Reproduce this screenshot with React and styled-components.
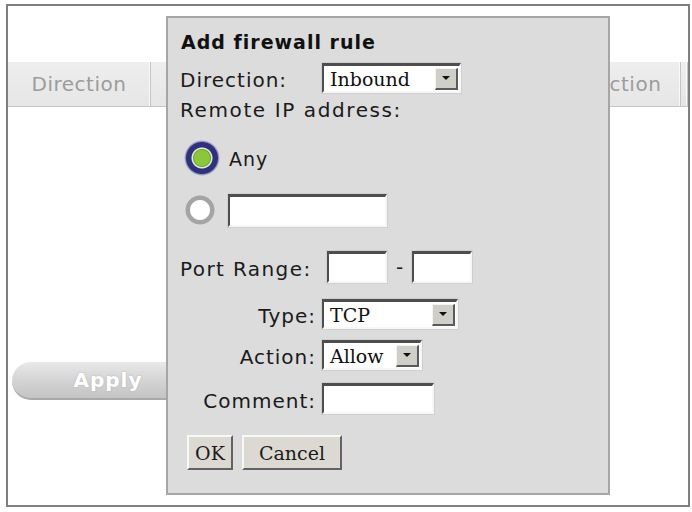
import React from "react";
import styled, { createGlobalStyle } from "styled-components";

const GlobalStyle = createGlobalStyle`
  body {
    margin: 0;
    background: #ffffff;
    font-family: "DejaVu Sans", Verdana, sans-serif;
  }
`;

const Frame = styled.div`
  position: relative;
  box-sizing: border-box;
  width: 684px;
  height: 503px;
  margin: 4px 0 0 6px;
  border: 2px solid #7f7f7f;
  background: #ffffff;
  overflow: hidden;
`;

const HeaderRow = styled.div`
  display: grid;
  grid-template-columns: 143px 426px 104px 7px;
  height: 44px;
  margin-top: 56px;
  border-bottom: 1px solid #c6c6c6;
`;

const HeaderCell = styled.div`
  box-sizing: border-box;
  display: flex;
  align-items: center;
  justify-content: center;
  background: linear-gradient(#eeeeee, #e6e6e6);
  border-right: 1px solid #c4c4c4;
  box-shadow: inset -1px 0 0 #fafafa;
  color: #9c9c9c;
  font-size: 20px;
  letter-spacing: 0.5px;
`;

const ApplyButton = styled.div`
  box-sizing: border-box;
  width: 192px;
  height: 38px;
  margin: 255px 0 0 4px;
  border-radius: 19px;
  border-bottom: 2px solid #a9a9a9;
  background: linear-gradient(#e9e9e9, #d6d6d6 45%, #c4c4c4);
  display: flex;
  align-items: center;
  justify-content: center;
  color: #ffffff;
  font-weight: bold;
  font-size: 20px;
  letter-spacing: 1px;
  text-shadow: 0 0 2px #b0b0b0;
`;

const Dialog = styled.div`
  position: absolute;
  left: 158px;
  top: 10px;
  box-sizing: border-box;
  width: 444px;
  height: 479px;
  padding: 12px 0 0 12px;
  background: #dcdcdc;
  border: 2px solid #a6a6a6;
  display: flex;
  flex-direction: column;
  color: #1a1a1a;
`;

const Title = styled.div`
  height: 24px;
  margin-left: 1px;
  font-weight: bold;
  font-size: 19px;
  line-height: 24px;
  letter-spacing: 1px;
  color: #111;
`;

const Row = styled.div`
  display: flex;
  align-items: center;
  height: ${(p) => p.$h}px;
  margin-top: ${(p) => p.$mt}px;
`;

const Label = styled.span`
  box-sizing: border-box;
  width: ${(p) => (p.$w ? `${p.$w}px` : "auto")};
  text-align: ${(p) => (p.$right ? "right" : "left")};
  padding-top: 4px;
  font-size: 20px;
  line-height: 22px;
  letter-spacing: ${(p) => p.$ls || 1}px;
  white-space: nowrap;
`;

const Field = styled.div`
  box-sizing: border-box;
  width: ${(p) => p.$w}px;
  height: ${(p) => p.$h}px;
  margin-left: ${(p) => p.$ml || 0}px;
  background: #ffffff;
  border-top: 3px solid #4e4e4e;
  border-left: 2px solid #4e4e4e;
  border-bottom: 2px solid #f7f7f7;
  border-right: 2px solid #f7f7f7;
  box-shadow: 0 0 0 1px #cfcfcf;
`;

const Select = styled(Field)`
  display: flex;
  align-items: center;
  justify-content: space-between;
  padding: 0 1px 0 6px;
`;

const SelectValue = styled.span`
  font-family: "DejaVu Serif", "Liberation Serif", serif;
  font-size: 19px;
  line-height: 22px;
  color: #111;
  white-space: nowrap;
`;

const ArrowButton = styled.span`
  box-sizing: border-box;
  flex: none;
  width: 23px;
  height: 22px;
  background: #d0cec8;
  border-top: 1px solid #f4f4f4;
  border-left: 1px solid #f4f4f4;
  border-bottom: 2px solid #5a5a5a;
  border-right: 2px solid #5a5a5a;
  display: flex;
  align-items: center;
  justify-content: center;

  &::after {
    content: "";
    border-left: 4px solid transparent;
    border-right: 4px solid transparent;
    border-top: 4px solid #111;
  }
`;

const RadioOn = styled.span`
  width: 36px;
  height: 36px;
  margin-left: 4px;
  border-radius: 50%;
  background: radial-gradient(
    circle closest-side,
    #8cc63a 0 7.5px,
    #6fa822 8.5px,
    #e4e6ee 9.5px 10px,
    #2f3276 11px 15.5px,
    #8f93c8 16.5px,
    transparent 18px
  );
`;

const RadioOff = styled.span`
  width: 30px;
  height: 30px;
  margin-left: 5px;
  border-radius: 50%;
  background: radial-gradient(
    circle closest-side,
    #ffffff 0 9.5px,
    #a4a4a4 10.5px 14px,
    transparent 15px
  );
`;

const RadioText = styled.span`
  margin-left: 9px;
  font-size: 19px;
  letter-spacing: 1px;
  padding-top: 2px;
`;

const Dash = styled.span`
  width: 25px;
  text-align: center;
  font-size: 20px;
`;

const Button = styled.button`
  box-sizing: border-box;
  height: 35px;
  width: ${(p) => p.$w}px;
  margin-left: ${(p) => p.$ml}px;
  padding: 0;
  background: #dbd9d2;
  border-top: 2px solid #f8f8f8;
  border-left: 2px solid #f8f8f8;
  border-bottom: 2px solid #626262;
  border-right: 2px solid #626262;
  font-family: "DejaVu Serif", "Liberation Serif", serif;
  font-size: 19px;
  color: #1a1a1a;
`;

export default function App() {
  return (
    <>
      <GlobalStyle />
      <Frame>
        <HeaderRow>
          <HeaderCell>Direction</HeaderCell>
          <HeaderCell />
          <HeaderCell>Action</HeaderCell>
          <HeaderCell />
        </HeaderRow>
        <ApplyButton>Apply</ApplyButton>

        <Dialog>
          <Title>Add firewall rule</Title>
          <Row $h={30} $mt={9}>
            <Label $w={142}>Direction:</Label>
            <Select $w={139} $h={30}>
              <SelectValue>Inbound</SelectValue>
              <ArrowButton />
            </Select>
          </Row>
          <Row $h={24} $mt={3}>
            <Label $ls={1.6}>Remote IP address:</Label>
          </Row>
          <Row $h={36} $mt={20}>
            <RadioOn />
            <RadioText>Any</RadioText>
          </Row>
          <Row $h={34} $mt={17}>
            <RadioOff />
            <Field $w={159} $h={33} $ml={13} />
          </Row>
          <Row $h={33} $mt={23}>
            <Label $w={147} $ls={1.4}>Port Range:</Label>
            <Field $w={60} $h={32} />
            <Dash>-</Dash>
            <Field $w={60} $h={32} />
          </Row>
          <Row $h={30} $mt={16}>
            <Label $w={136} $right>Type:</Label>
            <Select $w={136} $h={30} $ml={6}>
              <SelectValue>TCP</SelectValue>
              <ArrowButton />
            </Select>
          </Row>
          <Row $h={30} $mt={11}>
            <Label $w={136} $right>Action:</Label>
            <Select $w={100} $h={30} $ml={6}>
              <SelectValue>Allow</SelectValue>
              <ArrowButton />
            </Select>
          </Row>
          <Row $h={31} $mt={13}>
            <Label $w={136} $right>Comment:</Label>
            <Field $w={112} $h={31} $ml={6} />
          </Row>
          <Row $h={35} $mt={21}>
            <Button $w={46} $ml={7}>OK</Button>
            <Button $w={100} $ml={9}>Cancel</Button>
          </Row>
        </Dialog>
      </Frame>
    </>
  );
}
